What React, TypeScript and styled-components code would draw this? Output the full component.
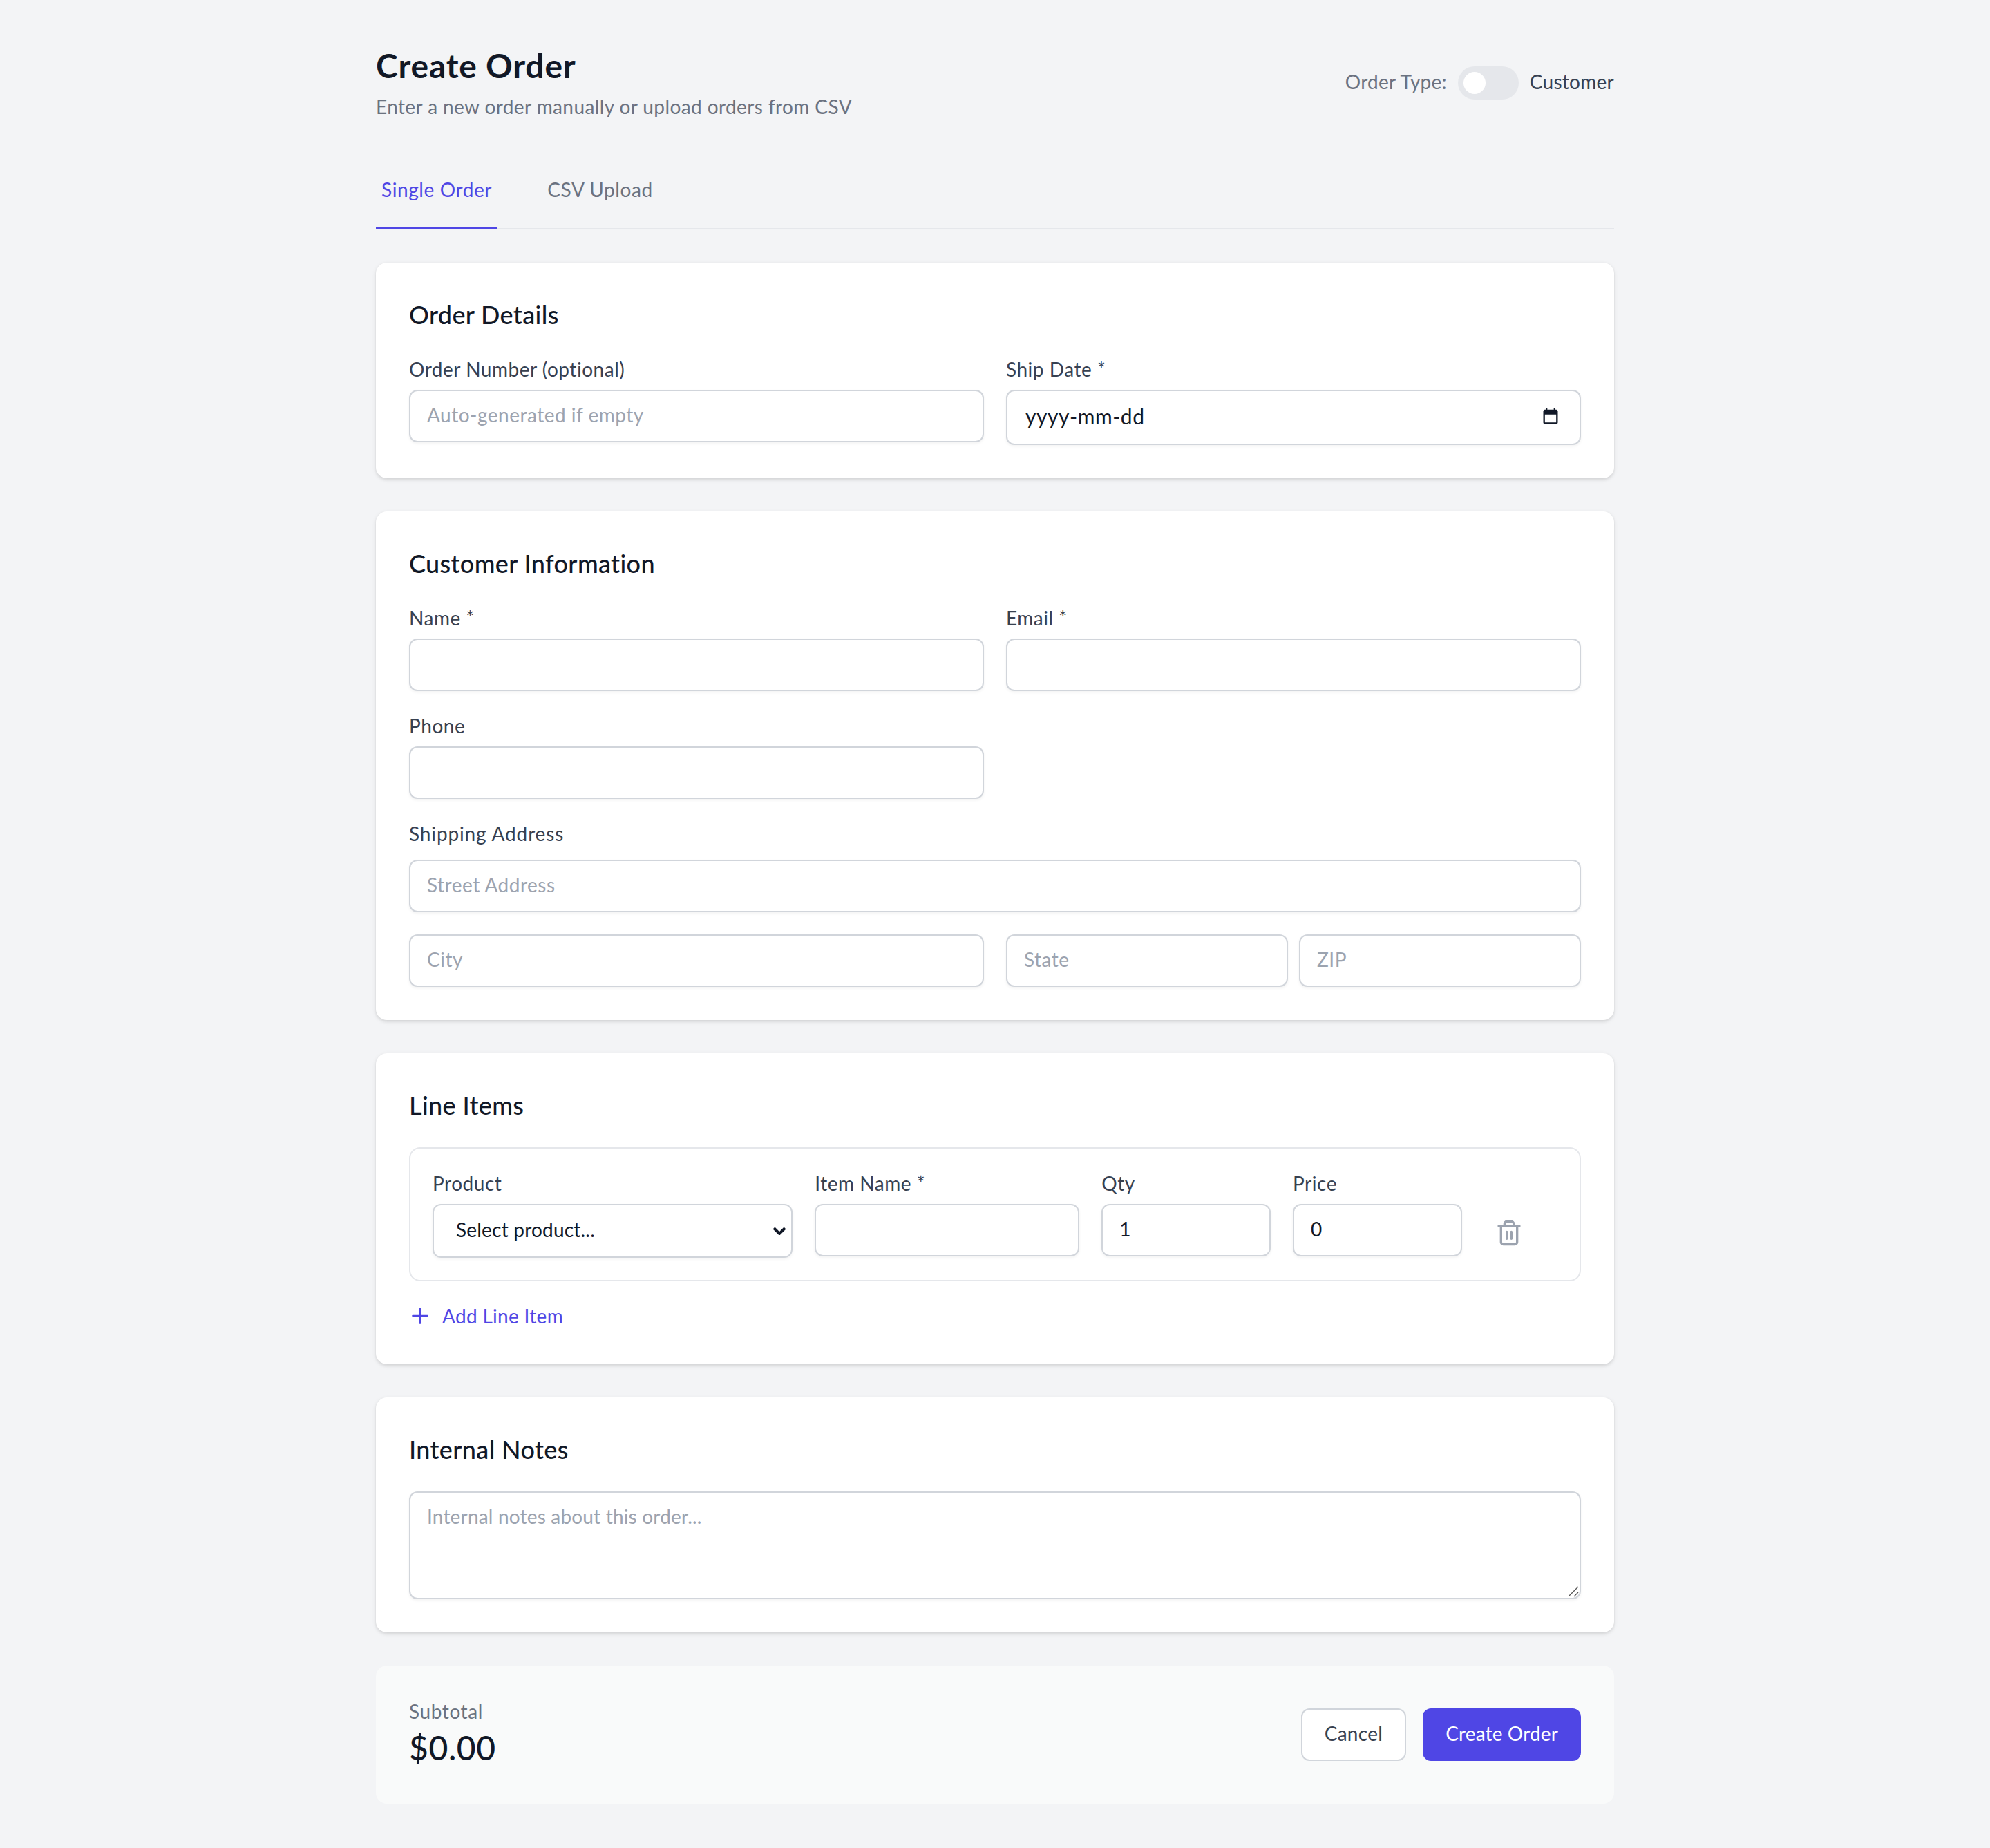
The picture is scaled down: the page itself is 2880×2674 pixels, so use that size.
import React from "react";
import styled, { createGlobalStyle, css } from "styled-components";
import { Trash2 } from "lucide-react";

const chevronSvg = encodeURIComponent(
  '<svg xmlns="http://www.w3.org/2000/svg" viewBox="0 0 10 6"><path d="M1 1l4 4 4-4" stroke="#111827" stroke-width="2" fill="none"/></svg>'
);

const GlobalStyle = createGlobalStyle`
  html {
    zoom: 2;
  }
  body {
    margin: 0;
    background: #f3f4f6;
    font-family: "Lato", "Liberation Sans", sans-serif;
    color: #111827;
    -webkit-font-smoothing: antialiased;
  }
  * {
    box-sizing: border-box;
  }
`;

// Lato sits about 1px lower than the original font, so text lines are 2px shorter with the rest below
const smallText = css`
  font-size: 14px;
  line-height: 18px;
  padding-bottom: 2px;
`;

const fieldBox = css`
  display: block;
  width: 100%;
  border: 1px solid #d1d5db;
  border-radius: 6px;
  background: #fff;
  box-shadow: 0 1px 2px rgba(0, 0, 0, 0.05);
  font-family: inherit;
  font-size: 14px;
  line-height: 20px;
  color: #111827;
`;

const TopEdge = styled.div`
  height: 0;
  box-shadow: 0 1px 2px rgba(0, 0, 0, 0.05);
`;

const Container = styled.main`
  width: 896px;
  min-height: 1337px;
  margin: 0 auto;
  padding: 32px 0;
`;

const Header = styled.header`
  display: flex;
  justify-content: space-between;
  align-items: center;
  margin-bottom: 24px;
`;

const Title = styled.h1`
  margin: 0;
  font-size: 24px;
  line-height: 31px;
  padding-bottom: 1px;
  font-weight: 700;
  letter-spacing: 0.4px;
  color: #111827;
`;

const Subtitle = styled.p`
  ${smallText}
  margin: 4px 0 0;
  letter-spacing: 0.2px;
  color: #6b7280;
`;

const OrderType = styled.div`
  ${smallText}
  display: flex;
  align-items: center;
  gap: 8px;
  letter-spacing: 0.13px;
`;

const TypeLabel = styled.span<{ $active?: boolean }>`
  color: ${(p) => (p.$active ? "#374151" : "#6b7280")};
`;

const Toggle = styled.button`
  position: relative;
  width: 44px;
  height: 24px;
  margin-bottom: -2px;
  padding: 0;
  border: none;
  border-radius: 12px;
  background: #e5e7eb;
  &:after {
    content: "";
    position: absolute;
    left: 4px;
    top: 4px;
    width: 16px;
    height: 16px;
    border-radius: 50%;
    background: #fff;
  }
`;

const Tabs = styled.nav`
  display: flex;
  gap: 32px;
  border-bottom: 1px solid #e5e7eb;
  margin-bottom: 24px;
`;

const Tab = styled.button<{ $active?: boolean }>`
  padding: 15px 4px 17px;
  margin-bottom: -1px;
  background: none;
  border: none;
  border-bottom: 2px solid ${(p) => (p.$active ? "#4f46e5" : "transparent")};
  font-family: inherit;
  font-size: 14px;
  line-height: 20px;
  font-weight: 400;
  letter-spacing: 0.3px;
  color: ${(p) => (p.$active ? "#4f46e5" : "#6b7280")};
`;

const Card = styled.section`
  background: #fff;
  border-radius: 8px;
  padding: 24px;
  margin-bottom: 24px;
  box-shadow: 0 1px 3px rgba(0, 0, 0, 0.1), 0 1px 2px rgba(0, 0, 0, 0.06);
`;

const CardTitle = styled.h2`
  margin: 0 0 16px;
  font-size: 18px;
  line-height: 27px;
  padding-bottom: 1px;
  font-weight: 500;
  letter-spacing: 0.18px;
  color: #111827;
`;

const TwoCols = styled.div`
  display: grid;
  grid-template-columns: 1fr 1fr;
  gap: 16px;
`;

const SplitCols = styled.div`
  display: grid;
  grid-template-columns: 1fr 1fr;
  gap: 8px;
`;

const Stack = styled.div`
  display: flex;
  flex-direction: column;
  gap: 16px;
`;

const Label = styled.label<{ $gap?: number; $spacing?: number }>`
  ${smallText}
  display: block;
  margin-bottom: ${(p) => p.$gap ?? 4}px;
  font-weight: 400;
  letter-spacing: ${(p) => p.$spacing ?? 0.26}px;
  color: #374151;
`;

const Input = styled.input`
  ${fieldBox}
  padding: 7px 12px 9px;
  letter-spacing: 0.25px;
  &::placeholder {
    color: #9ca3af;
  }
`;

const DateField = styled.div`
  position: relative;
`;

const DateInput = styled(Input)`
  height: 40px;
  padding: 7px 12px 9px 13px;
  font-size: 15px;
  letter-spacing: 0.27px;
`;

const CalendarIcon = styled.svg`
  position: absolute;
  top: 12px;
  right: 15px;
  width: 14px;
  height: 14px;
  fill: #111827;
`;

const Select = styled.select`
  ${fieldBox}
  appearance: none;
  height: 39px;
  padding: 7px 24px 9px 16px;
  letter-spacing: 0.1px;
  background: #fff url("data:image/svg+xml,${chevronSvg}") no-repeat right 3.5px center / 10px 6px;
`;

const NotesField = styled.div`
  position: relative;
`;

const TextArea = styled.textarea`
  ${fieldBox}
  height: 78px;
  padding: 7px 12px 9px;
  letter-spacing: 0.09px;
  resize: none;
  &::placeholder {
    color: #9ca3af;
  }
`;

const ResizeGrip = styled.svg`
  position: absolute;
  right: 1px;
  bottom: 1px;
  width: 15px;
  height: 15px;
  pointer-events: none;
  fill: none;
  stroke: #555;
  stroke-width: 0.7;
`;

const ItemBox = styled.div`
  border: 1px solid #e5e7eb;
  border-radius: 8px;
  padding: 16px;
`;

const ItemGrid = styled.div`
  display: grid;
  grid-template-columns: repeat(12, minmax(0, 1fr));
  gap: 16px;
`;

const ItemCell = styled.div<{ $span: number }>`
  grid-column: span ${(p) => p.$span};
`;

const TrashCell = styled.div`
  grid-column: span 1;
  display: flex;
  align-items: flex-end;
`;

const IconButton = styled.button`
  display: flex;
  padding: 8px;
  background: none;
  border: none;
  color: #9ca3af;
`;

const AddItem = styled.button`
  ${smallText}
  display: flex;
  align-items: center;
  gap: 8px;
  margin-top: 16px;
  padding-left: 0;
  padding-right: 0;
  padding-top: 0;
  background: none;
  border: none;
  font-family: inherit;
  letter-spacing: 0.15px;
  color: #4f46e5;
`;

const Footer = styled.footer`
  display: flex;
  align-items: center;
  justify-content: space-between;
  padding: 24px;
  border-radius: 8px;
  background: #f9fafa;
`;

const SubtotalLabel = styled.div`
  ${smallText}
  letter-spacing: 0.3px;
  color: #6b7280;
`;

const SubtotalValue = styled.div`
  font-size: 24px;
  line-height: 31px;
  padding-bottom: 1px;
  font-weight: 500;
  letter-spacing: 0.3px;
  color: #111827;
`;

const Actions = styled.div`
  display: flex;
  gap: 12px;
`;

const Button = styled.button<{ $primary?: boolean }>`
  height: 38px;
  padding: 0 ${(p) => (p.$primary ? 15.5 : 16)}px 2px;
  border: 1px solid ${(p) => (p.$primary ? "transparent" : "#d1d5db")};
  border-radius: 6px;
  background: ${(p) => (p.$primary ? "#4f46e5" : "#fff")};
  font-family: inherit;
  font-size: 14px;
  font-weight: 400;
  letter-spacing: ${(p) => (p.$primary ? "0.07px" : "0.15px")};
  color: ${(p) => (p.$primary ? "#fff" : "#374151")};
`;

function PlusIcon() {
  return (
    <svg width="16" height="16" viewBox="0 0 24 24" fill="none" stroke="currentColor" strokeWidth="1.75" strokeLinecap="round">
      <path d="M12 4v16m8-8H4" />
    </svg>
  );
}

export default function App() {
  return (
    <>
      <GlobalStyle />
      <TopEdge />
      <Container>
        <Header>
          <div>
            <Title>Create Order</Title>
            <Subtitle>Enter a new order manually or upload orders from CSV</Subtitle>
          </div>
          <OrderType>
            <TypeLabel>Order Type:</TypeLabel>
            <Toggle type="button" aria-label="Order type" />
            <TypeLabel $active>Customer</TypeLabel>
          </OrderType>
        </Header>

        <Tabs>
          <Tab $active>Single Order</Tab>
          <Tab>CSV Upload</Tab>
        </Tabs>

        <Card>
          <CardTitle>Order Details</CardTitle>
          <TwoCols>
            <div>
              <Label>Order Number (optional)</Label>
              <Input placeholder="Auto-generated if empty" />
            </div>
            <div>
              <Label>Ship Date *</Label>
              <DateField>
                <DateInput defaultValue="yyyy-mm-dd" />
                <CalendarIcon viewBox="0 0 24 24">
                  <path d="M19 4h-1V2h-2v2H8V2H6v2H5c-1.1 0-2 .9-2 2v14c0 1.1.9 2 2 2h14c1.1 0 2-.9 2-2V6c0-1.1-.9-2-2-2zm0 16H5V10h14v10z" />
                </CalendarIcon>
              </DateField>
            </div>
          </TwoCols>
        </Card>

        <Card>
          <CardTitle>Customer Information</CardTitle>
          <Stack>
            <TwoCols>
              <div>
                <Label>Name *</Label>
                <Input />
              </div>
              <div>
                <Label>Email *</Label>
                <Input />
              </div>
            </TwoCols>
            <TwoCols>
              <div>
                <Label>Phone</Label>
                <Input />
              </div>
            </TwoCols>
            <div>
              <Label $gap={8} $spacing={0.43}>Shipping Address</Label>
              <Stack>
                <Input placeholder="Street Address" />
                <TwoCols>
                  <Input placeholder="City" />
                  <SplitCols>
                    <Input placeholder="State" />
                    <Input placeholder="ZIP" />
                  </SplitCols>
                </TwoCols>
              </Stack>
            </div>
          </Stack>
        </Card>

        <Card>
          <CardTitle>Line Items</CardTitle>
          <ItemBox>
            <ItemGrid>
              <ItemCell $span={4}>
                <Label>Product</Label>
                <Select>
                  <option>Select product...</option>
                </Select>
              </ItemCell>
              <ItemCell $span={3}>
                <Label>Item Name *</Label>
                <Input />
              </ItemCell>
              <ItemCell $span={2}>
                <Label>Qty</Label>
                <Input type="number" defaultValue={1} />
              </ItemCell>
              <ItemCell $span={2}>
                <Label>Price</Label>
                <Input type="number" defaultValue={0} />
              </ItemCell>
              <TrashCell>
                <IconButton type="button" aria-label="Remove item">
                  <Trash2 size={20} />
                </IconButton>
              </TrashCell>
            </ItemGrid>
          </ItemBox>
          <AddItem type="button">
            <PlusIcon />
            Add Line Item
          </AddItem>
        </Card>

        <Card>
          <CardTitle>Internal Notes</CardTitle>
          <NotesField>
            <TextArea rows={3} placeholder="Internal notes about this order..." />
            <ResizeGrip viewBox="0 0 15 15">
              <path d="M7 14l7-7M11 14l3-3" />
            </ResizeGrip>
          </NotesField>
        </Card>

        <Footer>
          <div>
            <SubtotalLabel>Subtotal</SubtotalLabel>
            <SubtotalValue>$0.00</SubtotalValue>
          </div>
          <Actions>
            <Button type="button">Cancel</Button>
            <Button type="button" $primary>
              Create Order
            </Button>
          </Actions>
        </Footer>
      </Container>
    </>
  );
}
